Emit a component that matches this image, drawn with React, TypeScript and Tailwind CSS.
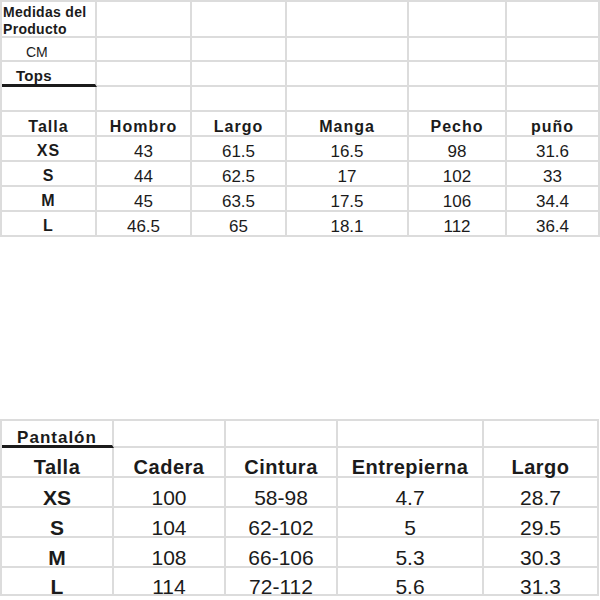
const font = { fontFamily: '"Liberation Sans", Arial, sans-serif' };

const tops = [
  ['XS', '43', '61.5', '16.5', '98', '31.6'],
  ['S', '44', '62.5', '17', '102', '33'],
  ['M', '45', '63.5', '17.5', '106', '34.4'],
  ['L', '46.5', '65', '18.1', '112', '36.4'],
];

const pants = [
  ['XS', '100', '58-98', '4.7', '28.7'],
  ['S', '104', '62-102', '5', '29.5'],
  ['M', '108', '66-106', '5.3', '30.3'],
  ['L', '114', '72-112', '5.6', '31.3'],
];

const cell = 'flex items-center justify-center border-r-2 border-b-2 border-[#dcdcdc] whitespace-nowrap leading-none';

function TopsTable() {
  const blank = (n: number) => Array.from({ length: n }, (_, i) => <div key={i} className={cell} />);
  return (
    <div className="grid w-[600px] grid-cols-[95px_95px_95px_122px_98px_93px] grid-rows-[36px_24px_25px_25px_25px_25px_25px_25px_25px] border-l-2 border-t-2 border-[#dcdcdc] text-[#1b1b1b]">
      <div className={`${cell} !justify-start pl-[1px] pt-[3px] text-[14px] font-bold !leading-[17px] tracking-[0.3px] !whitespace-normal`}>
        Medidas del Producto
      </div>
      {blank(5)}
      <div className={`${cell} !justify-start pl-[24px] pt-[6px] text-[14px]`}>CM</div>
      {blank(5)}
      <div className={`${cell} !justify-start !border-b-[3px] !border-b-[#1b1b1b] pl-[14px] pt-[5px] text-[15px] font-bold tracking-[0.3px]`}>
        Tops
      </div>
      {blank(5)}
      {blank(6)}
      {['Talla', 'Hombro', 'Largo', 'Manga', 'Pecho', 'puño'].map((h) => (
        <div key={h} className={`${cell} pt-[6px] text-[16px] font-bold tracking-[1px]`}>
          {h}
        </div>
      ))}
      {tops.map((row) =>
        row.map((v, i) => (
          <div key={row[0] + i} className={`${cell} pt-[5px] ${i === 0 ? 'text-[16px] font-bold tracking-[1px]' : 'text-[17px]'}`}>
            {v}
          </div>
        ))
      )}
    </div>
  );
}

function PantsTable() {
  return (
    <div className="grid w-[599px] grid-cols-[112px_112px_112px_146px_115px] grid-rows-[27px_30px_30px_30px_30px_28px] border-l-2 border-t-2 border-[#dcdcdc] text-[#1b1b1b]">
      <div className={`${cell} !border-b-[3px] !border-b-[#1b1b1b] pt-[8px] text-[17px] font-bold tracking-[1px]`}>Pantalón</div>
      {Array.from({ length: 4 }, (_, i) => (
        <div key={i} className={cell} />
      ))}
      {['Talla', 'Cadera', 'Cintura', 'Entrepierna', 'Largo'].map((h) => (
        <div key={h} className={`${cell} pt-[10px] text-[20px] font-bold tracking-[0.5px]`}>
          {h}
        </div>
      ))}
      {pants.map((row) =>
        row.map((v, i) => (
          <div key={row[0] + i} className={`${cell} pt-[11px] text-[21px] ${i === 0 ? 'font-bold' : ''}`}>
            {v}
          </div>
        ))
      )}
    </div>
  );
}

export default function App() {
  return (
    <div className="h-[600px] w-[600px] overflow-hidden bg-white" style={font}>
      <TopsTable />
      <div className="mt-[182px]">
        <PantsTable />
      </div>
    </div>
  );
}
